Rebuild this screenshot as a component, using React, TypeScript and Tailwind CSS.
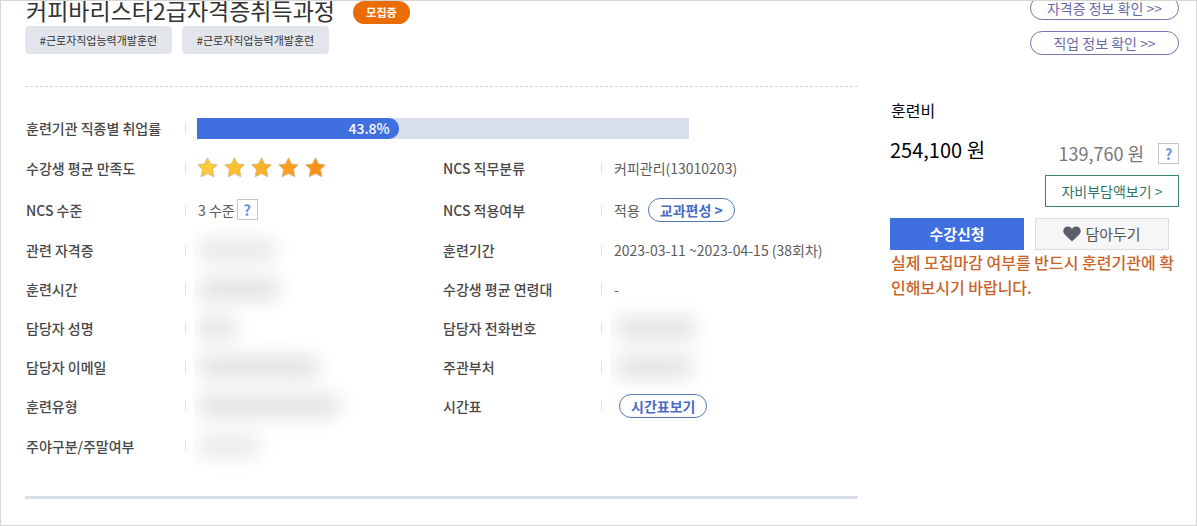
import React from 'react';

const STARS = ['#fbcb3a', '#fbc02d', '#fbb02a', '#faa021', '#f9921b'];

const TAGS = ['#근로자직업능력개발훈련', '#근로자직업능력개발훈련'];

const EMPLOYMENT_RATE = 43.8;

const Label: React.FC<{ children: React.ReactNode }> = ({ children }) => (
  <th scope="row" className="py-0 pl-px pr-0 text-left font-medium text-[#484848]">
    <div className="flex items-center justify-between">
      <span>{children}</span>
      <span className="h-3 w-px bg-[#e2e2e2]" />
    </div>
  </th>
);

const HelpButton: React.FC<{ label: string }> = ({ label }) => (
  <button
    type="button"
    aria-label={label}
    className="flex h-[21px] w-[21px] items-center justify-center border border-[#c4c7cc] bg-white text-[15px] font-bold leading-none text-[#6a92e4]"
  >
    ?
  </button>
);

const Hidden: React.FC<{ width: string; tone?: string }> = ({ width, tone = 'bg-[#dedede]' }) => (
  <div aria-hidden="true" className="-ml-1 overflow-x-clip pl-1">
    <div className={`h-5 rounded-full blur-[10px] ${width} ${tone}`} />
  </div>
);

const Rating: React.FC = () => (
  <div role="img" aria-label="별점 5점" className="flex gap-[5px]">
    {STARS.map((color) => (
      <svg key={color} viewBox="0 0 22 22" className="h-[22px] w-[22px]">
        <path
          d="M10.5 .8 13.6 7 20.2 7.800 15.500 12.500 16.900 19.800 10.500 16.600 4.100 19.800 5.500 12.500 .8 7.800 7.400 7Z"
          fill={color}
          stroke="#d3b27e"
          strokeWidth="0.8"
          strokeLinejoin="round"
        />
      </svg>
    ))}
  </div>
);

const CourseTable: React.FC = () => (
  <table className="mt-[22px] w-full table-fixed text-sm leading-5 text-[#5c5c5c]">
    <colgroup>
      <col className="w-[161px]" />
      <col className="w-[256px]" />
      <col className="w-[160px]" />
      <col />
    </colgroup>
    <tbody>
      <tr className="h-[38px]">
        <Label>훈련기관 직종별 취업률</Label>
        <td colSpan={3} className="py-0 pl-[11px]">
          <div className="h-[21px] w-[492px] max-w-full bg-[#d8deeb]">
            <div className="flex h-full w-[41%] items-center justify-end rounded-r-[10px] bg-[#4070df] pr-[9px] font-medium text-white">
              {EMPLOYMENT_RATE}%
            </div>
          </div>
        </td>
      </tr>
      <tr className="h-[41px]">
        <Label>수강생 평균 만족도</Label>
        <td className="py-0 pl-[11px]">
          <Rating />
        </td>
        <Label>NCS 직무분류</Label>
        <td className="py-0 pl-3">커피관리(13010203)</td>
      </tr>
      <tr className="h-[43px]">
        <Label>NCS 수준</Label>
        <td className="py-0 pl-3">
          <div className="flex items-center gap-[2px]">
            3 수준
            <HelpButton label="NCS 수준 도움말" />
          </div>
        </td>
        <Label>NCS 적용여부</Label>
        <td className="py-0 pl-3">
          <div className="flex items-center gap-2">
            적용
            <button
              type="button"
              className="flex h-6 items-center rounded-full border border-[#5577b5] px-[11px] font-bold text-[#4a6cc4]"
            >
              교과편성 &gt;
            </button>
          </div>
        </td>
      </tr>
      <tr className="h-[38px]">
        <Label>관련 자격증</Label>
        <td className="py-0 pl-[11px]">
          <Hidden width="w-20" tone="bg-[#e4e4e4]" />
        </td>
        <Label>훈련기간</Label>
        <td className="py-0 pl-3">2023-03-11 ~2023-04-15 (38회차)</td>
      </tr>
      <tr className="h-[39px]">
        <Label>훈련시간</Label>
        <td className="py-0 pl-[11px]">
          <Hidden width="w-[84px]" />
        </td>
        <Label>수강생 평균 연령대</Label>
        <td className="py-0 pl-3">-</td>
      </tr>
      <tr className="h-[39px]">
        <Label>담당자 성명</Label>
        <td className="py-0 pl-[11px]">
          <Hidden width="w-10" />
        </td>
        <Label>담당자 전화번호</Label>
        <td className="py-0 pl-3">
          <Hidden width="w-[84px]" />
        </td>
      </tr>
      <tr className="h-[39px]">
        <Label>담당자 이메일</Label>
        <td className="py-0 pl-[11px]">
          <Hidden width="w-[124px]" />
        </td>
        <Label>주관부처</Label>
        <td className="py-0 pl-3">
          <Hidden width="w-20" />
        </td>
      </tr>
      <tr className="h-10">
        <Label>훈련유형</Label>
        <td className="py-0 pl-[11px]">
          <Hidden width="w-36" />
        </td>
        <Label>시간표</Label>
        <td className="py-0 pl-[17px]">
          <button
            type="button"
            className="flex h-6 items-center rounded-full border border-[#5577b5] px-[11px] font-bold text-[#4a6cc4]"
          >
            시간표보기
          </button>
        </td>
      </tr>
      <tr className="h-10">
        <Label>주야구분/주말여부</Label>
        <td className="py-0 pl-[11px]">
          <Hidden width="w-16" tone="bg-[#e6e6e6]" />
        </td>
        <td colSpan={2} />
      </tr>
    </tbody>
  </table>
);

const PricePanel: React.FC = () => (
  <aside className="w-[289px] shrink-0">
    <div className="-mt-[5px] flex flex-col items-end gap-[11px] text-sm leading-5 text-[#6c68a6]">
      <a href="#license" className="flex h-6 w-[149px] items-center justify-center rounded-full border border-[#7975ad]">
        자격증 정보 확인 &gt;&gt;
      </a>
      <a href="#job" className="flex h-6 w-[149px] items-center justify-center rounded-full border border-[#7975ad]">
        직업 정보 확인 &gt;&gt;
      </a>
    </div>

    <h2 className="mt-[43px] pl-px text-base leading-6 text-black">훈련비</h2>
    <div className="mt-[13px] flex items-center justify-between">
      <strong className="text-xl font-normal leading-7 text-black">254,100 원</strong>
      <div className="flex items-center gap-[14px] pt-1.5">
        <span className="text-lg leading-6 text-[#777]">139,760 원</span>
        <HelpButton label="자비부담액 도움말" />
      </div>
    </div>
    <button
      type="button"
      className="ml-auto mt-[10px] flex h-8 w-[134px] items-center justify-center border border-[#3d8075] text-sm text-[#2f756a]"
    >
      자비부담액보기 &gt;
    </button>

    <div className="mt-[11px] flex gap-[11px] text-[15px]">
      <button type="button" className="h-8 w-[134px] bg-[#4070df] font-bold text-white">
        수강신청
      </button>
      <button
        type="button"
        className="flex h-8 w-[134px] items-center justify-center gap-1 border border-[#dcdcdc] bg-[#f6f6f6] text-[#555]"
      >
        <svg viewBox="0 0 18 16" className="h-4 w-[18px]" aria-hidden="true">
          <path
            d="M9 15.6 1.7 8.4C-.2 6.5 0 3.4 1.6 1.8 3.5-.1 7.2 0 9 2.9 10.8 0 14.5-.1 16.4 1.8 18 3.4 18.2 6.5 16.3 8.4Z"
            fill="#5c5d66"
          />
        </svg>
        담아두기
      </button>
    </div>
    <p className="pl-px text-base font-medium leading-[25px] text-[#c8642a]">
      실제 모집마감 여부를 반드시 훈련기관에 확인해보시기 바랍니다.
    </p>
  </aside>
);

const App: React.FC = () => {
  return (
    <main className="flex gap-8 overflow-hidden border border-[#d6d6d6] bg-white pb-[26px] pl-6 pr-[17px] font-['Noto_Sans_CJK_KR',sans-serif]">
      <section className="min-w-0 flex-1 border-b-[3px] border-[#d8deea] pb-[30px]">
        <div className="flex items-start gap-[18px] pl-px">
          <h1 className="-mt-[5px] text-[23px] leading-7 text-[#333]">커피바리스타2급자격증취득과정</h1>
          <span className="flex h-[23px] w-[57px] items-center justify-center rounded-full bg-[#eb6c05] text-[11px] font-bold text-white">
            모집중
          </span>
        </div>
        <ul className="mt-0.5 flex gap-[10px] border-b border-dashed border-[#d5d5d5] pb-8">
          {TAGS.map((tag, i) => (
            <li
              key={i}
              className="flex h-7 w-[147px] items-center justify-center rounded bg-[#e2e6ec] text-[11px] text-[#333]"
            >
              {tag}
            </li>
          ))}
        </ul>
        <CourseTable />
      </section>

      <PricePanel />
    </main>
  );
};

export default App;
